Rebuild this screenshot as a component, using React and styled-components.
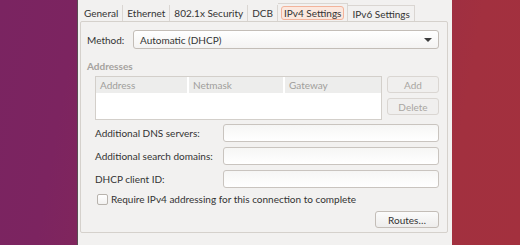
import React from 'react';
import styled, { createGlobalStyle } from 'styled-components';

const GlobalStyle = createGlobalStyle`
  html, body {
    margin: 0;
    padding: 0;
  }
  body {
    font-family: Lato, 'Open Sans', sans-serif;
    font-size: 10px;
    color: #3c3c3c;
  }
`;

const Desktop = styled.div`
  width: 520px;
  height: 245px;
  overflow: hidden;
  background: linear-gradient(100deg, #7a2461 0%, #7c2460 14%, #a2303f 86%, #a3303e 100%);
`;

const Window = styled.div`
  margin-left: 77px;
  width: 375px;
  height: 245px;
  box-sizing: border-box;
  background: #f2f1f0;
  border-left: 1px solid #5a4a52;
  padding: 3px 4px 0 2px;
  display: flex;
  flex-direction: column;
`;

const TabBar = styled.div`
  display: flex;
  align-items: flex-end;
  height: 18px;
`;

const Tab = styled.div`
  height: ${({ active }) => (active ? '18px' : '16px')};
  box-sizing: border-box;
  display: flex;
  align-items: center;
  padding: 0 ${({ active }) => (active ? '3px' : '1px')};
  border-right: 1px solid #dad6d2;
  border-top: ${({ boxed }) => (boxed ? '1px solid #dad6d2' : 'none')};
  color: #333333;
  white-space: nowrap;
`;

const TabLabel = styled.span`
  padding: 0 2px;
  border-radius: 3px;
  line-height: 12px;
  border: 1px solid ${({ focus }) => (focus ? '#f2b39b' : 'transparent')};
  background: ${({ focus }) => (focus ? '#fbe8df' : 'transparent')};
`;

const Frame = styled.div`
  height: 212px;
  box-sizing: border-box;
  border: 1px solid #d5d1cc;
  border-radius: 2px;
  padding: 8px 8px 0 6px;
  display: flex;
  flex-direction: column;
`;

const MethodRow = styled.div`
  display: flex;
  align-items: center;
  height: 19px;
`;

const Label = styled.span`
  color: #333333;
  white-space: nowrap;
  width: ${({ w }) => w || 'auto'};
  flex-shrink: 0;
`;

const Combo = styled.div`
  flex: 1;
  height: 19px;
  box-sizing: border-box;
  border: 1px solid #c3bdb7;
  border-radius: 3px;
  background: linear-gradient(#ffffff, #f4f3f2);
  display: flex;
  align-items: center;
  justify-content: space-between;
  padding: 0 6px 0 6px;
  color: #333333;
`;

const Arrow = styled.span`
  width: 0;
  height: 0;
  border-left: 4px solid transparent;
  border-right: 4px solid transparent;
  border-top: 4px solid #3c3c3c;
`;

const SectionTitle = styled.div`
  margin-top: 11px;
  font-weight: 700;
  color: #a5a29e;
  line-height: 12px;
`;

const Indent = styled.div`
  padding-left: 8px;
  display: flex;
  flex-direction: column;
`;

const TableRow = styled.div`
  margin-top: 4px;
  display: flex;
  gap: 5px;
`;

const Table = styled.div`
  flex: 1;
  height: 44px;
  box-sizing: border-box;
  border: 1px solid #d3cfca;
  background: #ffffff;
`;

const TableHead = styled.div`
  display: grid;
  grid-template-columns: 93px 96px 1fr;
  height: 16px;
  background: #ededec;
`;

const HeadCell = styled.div`
  padding-left: 4px;
  line-height: 16px;
  color: #a09e9b;
  border-right: ${({ last }) => (last ? 'none' : '2px solid #ffffff')};
`;

const SideButtons = styled.div`
  width: 52px;
  display: flex;
  flex-direction: column;
  gap: 5px;
`;

const Button = styled.div`
  height: 17px;
  width: ${({ w }) => w || 'auto'};
  box-sizing: border-box;
  border: 1px solid ${({ disabled }) => (disabled ? '#dad6d2' : '#c3bdb7')};
  border-radius: 3px;
  background: ${({ disabled }) => (disabled ? '#f0efee' : 'linear-gradient(#fbfbfb, #eeedec)')};
  color: ${({ disabled }) => (disabled ? '#a9a6a2' : '#333333')};
  display: flex;
  align-items: center;
  justify-content: center;
`;

const Form = styled.div`
  margin-top: 4px;
  display: grid;
  grid-template-columns: 128px 1fr;
  grid-auto-rows: 18px;
  row-gap: 5px;
  align-items: center;
`;

const Entry = styled.div`
  height: 18px;
  box-sizing: border-box;
  border: 1px solid #c9c4bf;
  border-radius: 3px;
  background: linear-gradient(#f6f6f5, #ffffff);
`;

const CheckRow = styled.label`
  margin-top: 4px;
  padding-left: 2px;
  display: flex;
  align-items: center;
  gap: 3px;
  height: 14px;
  line-height: 14px;
  color: #333333;
`;

const CheckBox = styled.span`
  width: 11px;
  height: 11px;
  box-sizing: border-box;
  border: 1px solid #b8b3ad;
  border-radius: 2px;
  background: linear-gradient(#ffffff, #f2f1f0);
`;

const Footer = styled.div`
  margin-top: 5px;
  display: flex;
  justify-content: flex-end;
`;

const tabs = ['General', 'Ethernet', '802.1x Security', 'DCB', 'IPv4 Settings', 'IPv6 Settings'];

const App = () => {
  return (
    <Desktop>
      <GlobalStyle />
      <Window>
        <TabBar>
          {tabs.map((t, i) => (
            <Tab key={t} active={i === 4} boxed={i >= 4}>
              <TabLabel focus={i === 4}>{t}</TabLabel>
            </Tab>
          ))}
        </TabBar>
        <Frame>
          <MethodRow>
            <Label w="46px">Method:</Label>
            <Combo>
              <span>Automatic (DHCP)</span>
              <Arrow />
            </Combo>
          </MethodRow>

          <SectionTitle>Addresses</SectionTitle>
          <Indent>
            <TableRow>
              <Table>
                <TableHead>
                  <HeadCell>Address</HeadCell>
                  <HeadCell>Netmask</HeadCell>
                  <HeadCell last>Gateway</HeadCell>
                </TableHead>
              </Table>
              <SideButtons>
                <Button disabled>Add</Button>
                <Button disabled>Delete</Button>
              </SideButtons>
            </TableRow>

            <Form>
              <Label>Additional DNS servers:</Label>
              <Entry />
              <Label>Additional search domains:</Label>
              <Entry />
              <Label>DHCP client ID:</Label>
              <Entry />
            </Form>

            <CheckRow>
              <CheckBox />
              <span>Require IPv4 addressing for this connection to complete</span>
            </CheckRow>
          </Indent>

          <Footer>
            <Button w="64px">Routes…</Button>
          </Footer>
        </Frame>
      </Window>
    </Desktop>
  );
};

export default App;
